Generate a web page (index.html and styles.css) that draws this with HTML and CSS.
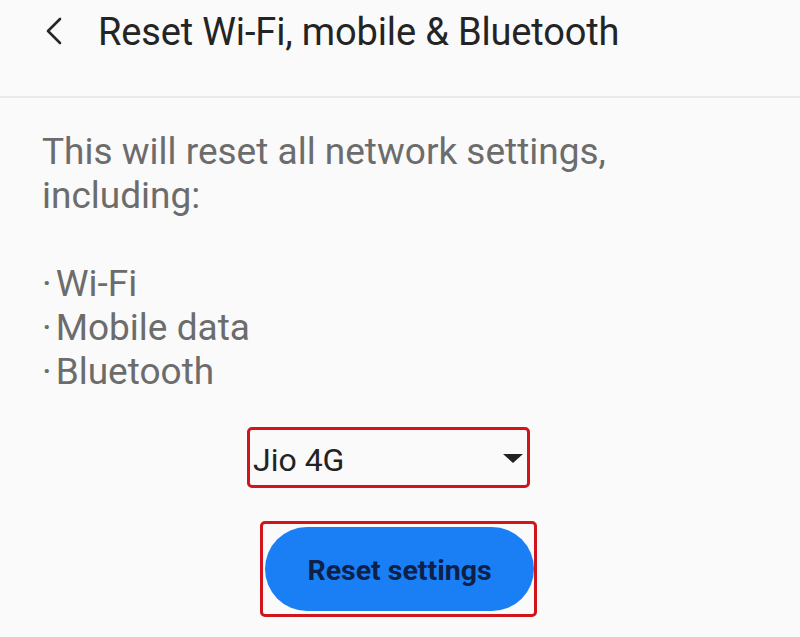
FILE: index.html
```html
<!DOCTYPE html>
<html>
<head>
<meta charset="utf-8">
<link rel="stylesheet" href="styles.css">
</head>
<body>
<div class="screen">
  <header class="appbar">
    <svg class="back" width="18" height="28" viewBox="0 0 18 28"><path d="M15 2 L3 14 L15 26" fill="none" stroke="#262626" stroke-width="2.6" stroke-linecap="round" stroke-linejoin="round"/></svg>
    <h1 class="title">Reset Wi-Fi, mobile &amp; Bluetooth</h1>
  </header>
  <main class="content">
    <p class="desc">This will reset all network settings,<br>including:</p>
    <ul class="items">
      <li><span class="dot">·</span>Wi-Fi</li>
      <li><span class="dot">·</span>Mobile data</li>
      <li><span class="dot">·</span>Bluetooth</li>
    </ul>
    <div class="mark mark-select">
      <div class="select">
        <span class="select-label">Jio 4G</span>
        <span class="caret"></span>
      </div>
    </div>
    <div class="mark mark-button">
      <button class="reset">Reset settings</button>
    </div>
  </main>
</div>
</body>
</html>
```
FILE: styles.css
```css
html, body {
  margin: 0;
  padding: 0;
  background: #fafafa;
}
.screen {
  width: 800px;
  height: 637px;
  overflow: hidden;
  font-family: Roboto, "Liberation Sans", sans-serif;
}
.appbar {
  display: flex;
  align-items: flex-start;
  height: 98px;
  box-sizing: border-box;
  padding: 10px 0 0 45px;
  border-bottom: 2px solid #e9e9e9;
}
.back {
  margin-top: 7px;
  flex: none;
}
.title {
  margin: 0 0 0 35px;
  font-size: 38px;
  line-height: 45px;
  font-weight: 400;
  color: #242424;
  letter-spacing: -0.15px;
}
.content {
  display: flex;
  flex-direction: column;
  align-items: flex-start;
  padding: 32px 0 0 42px;
}
.desc {
  margin: 0;
  font-size: 37px;
  line-height: 44px;
  color: #6c6c6c;
}
.items {
  list-style: none;
  margin: 44px 0 0 0;
  padding: 0;
  font-size: 37px;
  line-height: 44px;
  color: #6c6c6c;
}
.dot {
  margin-right: 4px;
}
.mark {
  border: 3px solid #d2141d;
  border-radius: 5px;
  box-sizing: border-box;
}
.mark-select {
  margin: 33px 0 0 205px;
  width: 283px;
  height: 61px;
}
.select {
  display: flex;
  align-items: center;
  justify-content: space-between;
  height: 100%;
  box-sizing: border-box;
  padding: 4px 4px 0 3px;
}
.select-label {
  font-size: 32px;
  color: #222;
}
.caret {
  width: 0;
  height: 0;
  border-left: 10px solid transparent;
  border-right: 10px solid transparent;
  border-top: 9px solid #222;
  margin-bottom: 2px;
}
.mark-button {
  margin: 33px 0 0 218px;
  width: 277px;
  height: 96px;
  padding: 3px 0 0 2px;
}
.reset {
  display: block;
  width: 269px;
  height: 84px;
  border: none;
  border-radius: 42px;
  background: #1a7ff5;
  color: #0c2149;
  font-family: Roboto, "Liberation Sans", sans-serif;
  font-weight: 700;
  font-size: 28.5px;
  padding: 2px 0 0 0;
}
```
